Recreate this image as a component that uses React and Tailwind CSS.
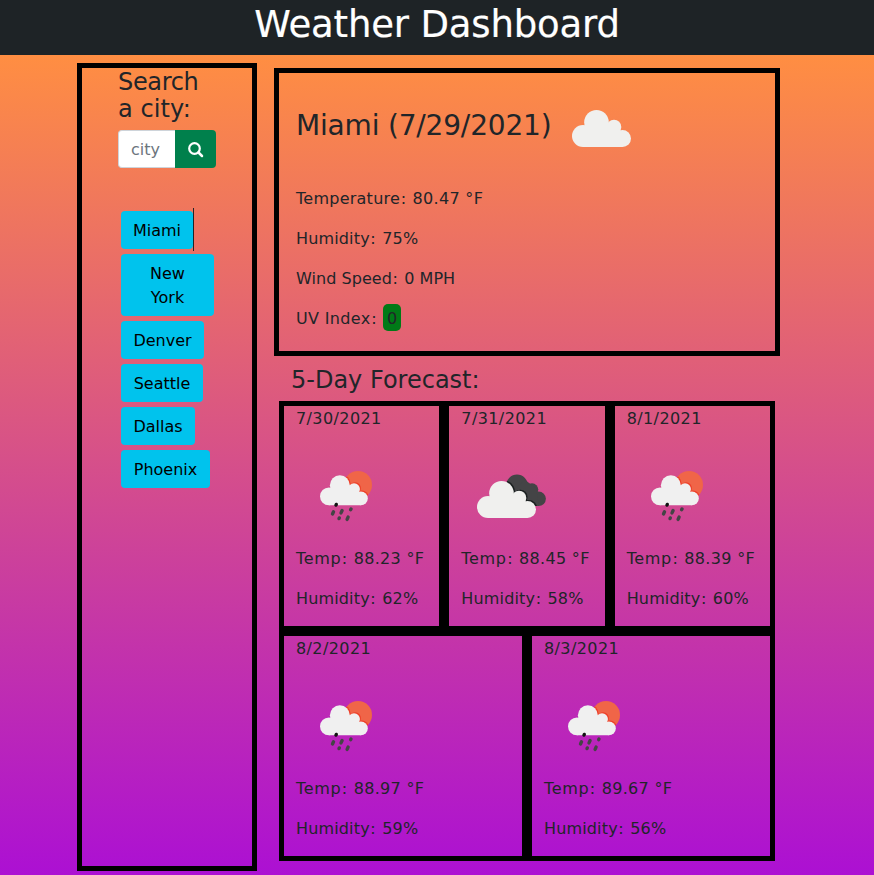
import React from "react";

const CLOUD = (
  <>
    <circle cx="11" cy="26" r="11" />
    <circle cx="24.500" cy="12.300" r="12.300" />
    <circle cx="42" cy="17" r="7.300" />
    <circle cx="50.500" cy="28.500" r="8.500" />
    <path d="M11 37H50.500V22L38 13H14L11 22Z" />
  </>
);

const BACK_CLOUD = (
  <>
    <circle cx="56" cy="39.300" r="10.800" />
    <circle cx="71" cy="43.600" r="6.300" />
    <circle cx="77.600" cy="52.800" r="7.300" />
    <path d="M50 46L64 34L75 42L78 60H64Z" />
  </>
);

function Cloud() {
  return (
    <svg width="100" height="100" viewBox="0 0 100 100" className="block" fill="#f0f0ee">
      <g transform="translate(21 34)">{CLOUD}</g>
    </svg>
  );
}

function BrokenClouds() {
  return (
    <svg width="100" height="100" viewBox="0 0 100 100" className="block">
      <clipPath id="back-cloud">{BACK_CLOUD}</clipPath>
      <g fill="#444446">{BACK_CLOUD}</g>
      <g clipPath="url(#back-cloud)">
        <g transform="translate(17.300 34)" fill="#1b2020">{CLOUD}</g>
      </g>
      <g transform="translate(16 35)" fill="#f0f0ee">{CLOUD}</g>
    </svg>
  );
}

function SunRain() {
  return (
    <svg width="100" height="100" viewBox="0 0 100 100" className="block">
      <clipPath id="sun">
        <circle cx="62" cy="39" r="14" />
      </clipPath>
      <circle cx="62" cy="39" r="14" fill="#f06548" />
      <g clipPath="url(#sun)">
        <g transform="translate(25 28.300) scale(.81)" fill="#ed3f28">{CLOUD}</g>
      </g>
      <g transform="translate(24 29.300) scale(.81)" fill="#f0f0f0">{CLOUD}</g>
      <g stroke="#444446" strokeWidth="3.400" strokeLinecap="round">
        <path d="M40 59.100L40.300 58.400" stroke="#111" />
        <path d="M36.500 68L37.500 65.700" />
        <path d="M45 66.900L46.100 64.500" />
        <path d="M54.700 63.700L55 63" />
        <path d="M43 72.600L43.300 71.900" />
        <path d="M51.100 73.400L52.100 71.100" />
      </g>
    </svg>
  );
}

const cities = [
  { name: "Miami", box: "w-[72px] h-[38px]" },
  { name: "New York", box: "w-[93px] h-[62px]" },
  { name: "Denver", box: "w-[83px] h-[38px]" },
  { name: "Seattle", box: "w-[82px] h-[38px]" },
  { name: "Dallas", box: "w-[74px] h-[38px]" },
  { name: "Phoenix", box: "w-[89px] h-[38px]" },
];

const days = [
  { date: "7/30/2021", temp: "88.23", humidity: 62, Icon: SunRain },
  { date: "7/31/2021", temp: "88.45", humidity: 58, Icon: BrokenClouds },
  { date: "8/1/2021", temp: "88.39", humidity: 60, Icon: SunRain },
  { date: "8/2/2021", temp: "88.97", humidity: 59, Icon: SunRain },
  { date: "8/3/2021", temp: "89.67", humidity: 56, Icon: SunRain },
];

function Label({ children, className }) {
  return (
    <>
      <span className={className}>{children}</span>
      <span className="mr-[1.300px] ml-[0.600px]">:</span>{" "}
    </>
  );
}

function Day({ date, temp, humidity, Icon }) {
  return (
    <div className="h-[230px] min-w-0 flex-1 border-[5px] border-black pt-px pl-3 whitespace-nowrap">
      <p className="h-[39px] tracking-[0.4px]">{date}</p>
      <div className="h-[101px]">
        <Icon />
      </div>
      <p className="h-10">
        <Label className="tracking-[0.65px]">Temp</Label>
        <span className="tracking-[0.33px]">{temp} °F</span>
      </p>
      <p>
        <Label className="tracking-[0.15px]">Humidity</Label>
        <span className="tracking-[0.2px]">{humidity}%</span>
      </p>
    </div>
  );
}

export default function App() {
  return (
    <div className="flex h-[875px] w-[874px] flex-col overflow-hidden font-['Verdana','DejaVu_Sans',sans-serif] text-base leading-6 text-[#212529]">
      <header className="h-[55px] shrink-0 bg-[#1e2326] text-center text-[37px] leading-[50px] tracking-[-0.15px] text-white [-webkit-text-stroke:0.2px_white]">
        <h1>Weather Dashboard</h1>
      </header>
      <div className="flex flex-1 bg-linear-to-b/srgb from-[#ff8e42] to-[#ac10d3] pl-[77px]">
        <aside className="mt-2 h-[808px] w-[180px] border-[5px] border-black pl-9">
          <h2 className="pt-px text-2xl leading-[27px]">
            <span className="tracking-[-0.35px]">Search</span>
            <br />
            <span className="tracking-[0.1px]">a city:</span>
          </h2>
          <form className="mt-[7px] flex h-[38px] w-[98px]">
            <input
              className="w-[57px] rounded-l border border-r-0 border-[#ced4da] bg-white pt-0.5 pl-3 placeholder:text-[#6c757d] placeholder:opacity-100"
              placeholder="city"
            />
            <button type="button" className="flex w-[41px] items-center justify-center rounded-r bg-[#00804c]">
              <svg width="16" height="16" viewBox="0 0 16 16" className="mt-0.5" fill="none" stroke="white">
                <circle cx="6.500" cy="6.500" r="5.300" strokeWidth="2.200" />
                <path d="M10.500 10.500L14 14" strokeWidth="2.500" strokeLinecap="round" />
              </svg>
            </button>
          </form>
          <ul className="mt-10 flex flex-col items-start text-black">
            {cities.map(({ name, box }, i) => (
              <li key={name} className={i === 0 ? "border-r border-[#212529] py-[2.500px] pl-[3px]" : "py-[2.500px] pl-[3px]"}>
                <button type="button" className={"flex items-center justify-center rounded bg-[#00c3ed] px-3 pt-0.5 " + box}>
                  {name}
                </button>
              </li>
            ))}
          </ul>
        </aside>
        <main className="ml-[17px] w-[506px] pt-[13px]">
          <section className="h-[288px] border-[5px] border-black pl-[17px]">
            <div className="flex h-[114px] items-start pt-1">
              <h2 className="mt-[33px] w-[255px] text-[28px] leading-8 tracking-[-0.18px] whitespace-nowrap">Miami (7/29/2021)</h2>
              <div className="-mt-px">
                <Cloud />
              </div>
            </div>
            <p className="h-10">
              <Label className="tracking-[0.25px]">Temperature</Label>
              <span className="tracking-[0.33px]">80.47 °F</span>
            </p>
            <p className="h-10">
              <Label className="tracking-[0.15px]">Humidity</Label>
              <span className="tracking-[0.2px]">75%</span>
            </p>
            <p className="h-10">
              <Label className="tracking-[0.05px]">Wind Speed</Label>0 MPH
            </p>
            <p>
              <Label className="tracking-[0.35px]">UV Index</Label>
              <span className="relative -top-px rounded-[5px] bg-[#007a17] px-1 py-1">
                <span className="relative top-px">0</span>
              </span>
            </p>
          </section>
          <h2 className="h-[45px] pt-[10px] pl-[17px] text-2xl leading-[29px]">5-Day Forecast:</h2>
          <section className="px-[5px]">
            <div className="flex">
              {days.slice(0, 3).map((d) => (
                <Day key={d.date} {...d} />
              ))}
            </div>
            <div className="flex">
              {days.slice(3).map((d) => (
                <Day key={d.date} {...d} />
              ))}
            </div>
          </section>
        </main>
      </div>
    </div>
  );
}
